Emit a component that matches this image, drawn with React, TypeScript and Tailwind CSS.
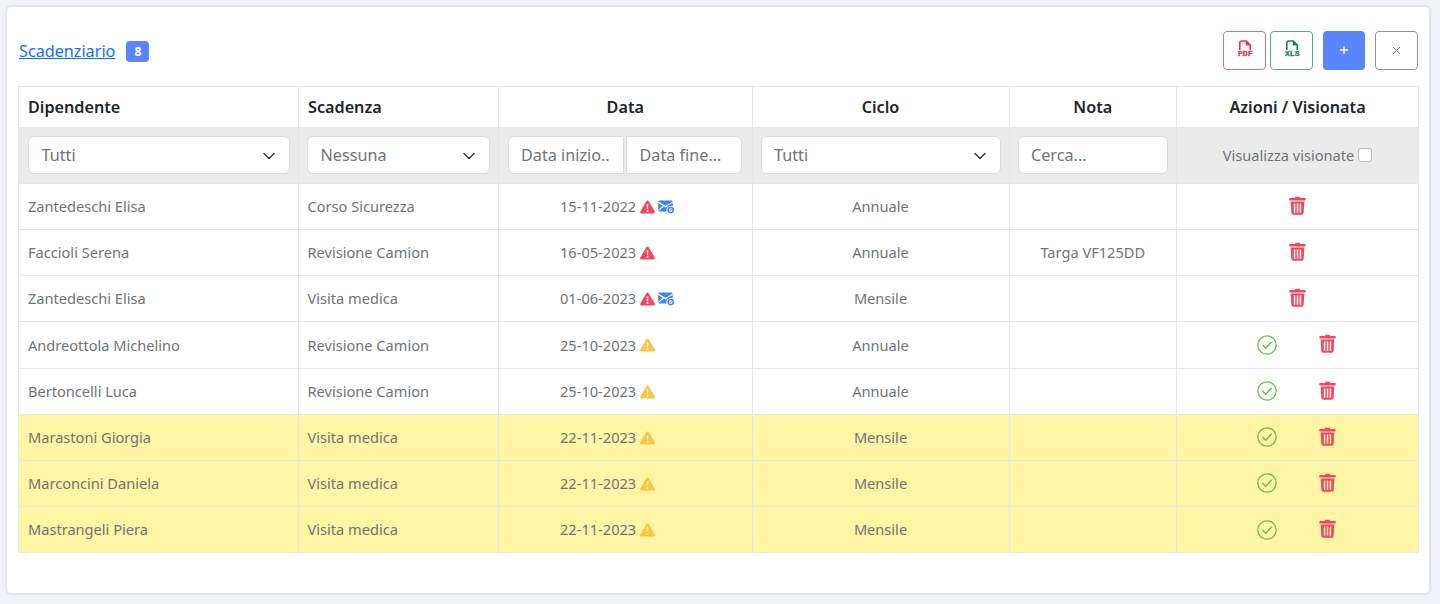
import React from "react";

const Trash = () => (
  <svg width="17" height="19" viewBox="0 0 16 18" className="block">
    <path d="M6 .6h4l.6 1.200H15a.8.8 0 0 1 .8.8v1a.7.7 0 0 1-.7.7H.9a.7.7 0 0 1-.7-.7v-1a.8.8 0 0 1 .8-.8h4.400z" fill="#f1475f" />
    <path fillRule="evenodd" d="M1.500 5.100h13l-.7 11a1.800 1.800 0 0 1-1.800 1.700H4a1.800 1.800 0 0 1-1.800-1.700zM4.500 7.100v8.700h1.400V7.100zM7.300 7.100v8.700h1.400V7.100zM10.100 7.100v8.700h1.400V7.100z" fill="#f1475f" />
  </svg>
);
const Check = () => (
  <svg width="20" height="20" viewBox="0 0 20 20" className="block -translate-x-[1px] translate-y-[1px]" fill="none">
    <circle cx="10" cy="10" r="9.200" stroke="#6cc04a" strokeWidth="1.300" />
    <path d="M5.800 10.300l2.900 2.900 5.500-6" stroke="#6cc04a" strokeWidth="1.500" strokeLinecap="round" strokeLinejoin="round" />
  </svg>
);
const Warn = ({ color }: { color: string }) => (
  <svg width="15" height="14" viewBox="0 0 15 14" className="block shrink-0">
    <path fillRule="evenodd" d="M7.500.5c.5 0 .9.3 1.200.7l6 10.400c.5.9-.1 1.900-1.200 1.900h-12c-1.100 0-1.700-1-1.200-1.900l6-10.400c.3-.4.7-.7 1.200-.7zM6.700 4.200l.2 5h1.200l.2-5zM7.500 9.900a1 1 0 1 0 0 2 1 1 0 0 0 0-2z" fill={color} />
  </svg>
);
const Mail = () => (
  <svg width="16" height="14" viewBox="0 0 16 14" className="block shrink-0 -ml-[1px]">
    <path d="M1.200.6h12.600c.5 0 .9.300 1 .8L7.500 5.700.2 1.400c.1-.5.500-.8 1-.8z" fill="#3f82f7" />
    <path d="M.2 3l4.600 2.700L.2 9.900zM14.800 3v3.200a4.200 4.200 0 0 0-4.800 1.400L8.900 5.900zM6 6.500l1.500.9 1.500-.9.400.7a4.200 4.200 0 0 0-.9 4.300H1.200c-.5 0-.8-.2-1-.6z" fill="#3f82f7" />
    <circle cx="12.700" cy="10.100" r="3.300" fill="#3f82f7" />
    <circle cx="12.700" cy="10.100" r="1.800" fill="#fff" />
    <path d="M11.700 11.100l2-2" stroke="#3f82f7" strokeWidth="1" />
  </svg>
);
const FileIcon = ({ color, label }: { color: string; label: string }) => (
  <span className="relative block w-[20px] h-[20px] translate-x-[1px]">
    <svg width="20" height="12" viewBox="0 0 20 12" className="absolute left-0 top-0" fill="none">
      <path d="M4.800 10V3a2 2 0 0 1 2-2h4.500l4 4v5" stroke={color} strokeWidth="1.600" />
      <path d="M10.800 1v4.500h4.500z" fill={color} />
    </svg>
    <span className="absolute left-[-2px] right-[-2px] top-[9.500px] text-center text-[8px] leading-[8px] font-bold font-['Liberation_Mono',monospace] [-webkit-text-stroke:0.3px]" style={{ color }}>
      {label}
    </span>
  </span>
);
const Chevron = () => (
  <svg width="12" height="8" viewBox="0 0 12 8" fill="none" className="absolute right-[14px] top-[15px]">
    <path d="M1 1.500l5 5 5-5" stroke="#343a40" strokeWidth="1.500" strokeLinecap="round" strokeLinejoin="round" />
  </svg>
);

const Select = ({ label, first }: { label: string; first?: boolean }) => (
  <div className={`relative h-[38px] bg-white border border-[#d8dbe0] rounded-[6px] pl-[12.500px] text-[16.200px] leading-[36px] text-[#6f7479] ${first ? "ml-[1px]" : ""}`}>
    {label}
    <Chevron />
  </div>
);

type Row = { n: string; s: string; d: string; w: string; mail?: boolean; c: string; nota?: string; check?: boolean; hl?: boolean };
const RED = "#f1475f";
const YEL = "#fbc444";
const rows: Row[] = [
  { n: "Zantedeschi Elisa", s: "Corso Sicurezza", d: "15-11-2022", w: RED, mail: true, c: "Annuale" },
  { n: "Faccioli Serena", s: "Revisione Camion", d: "16-05-2023", w: RED, c: "Annuale", nota: "Targa VF125DD" },
  { n: "Zantedeschi Elisa", s: "Visita medica", d: "01-06-2023", w: RED, mail: true, c: "Mensile" },
  { n: "Andreottola Michelino", s: "Revisione Camion", d: "25-10-2023", w: YEL, c: "Annuale", check: true },
  { n: "Bertoncelli Luca", s: "Revisione Camion", d: "25-10-2023", w: YEL, c: "Annuale", check: true },
  { n: "Marastoni Giorgia", s: "Visita medica", d: "22-11-2023", w: YEL, c: "Mensile", check: true, hl: true },
  { n: "Marconcini Daniela", s: "Visita medica", d: "22-11-2023", w: YEL, c: "Mensile", check: true, hl: true },
  { n: "Mastrangeli Piera", s: "Visita medica", d: "22-11-2023", w: YEL, c: "Mensile", check: true, hl: true },
];

const th = "border border-[#e4e6ea] h-[41px] p-0 text-[16.200px] font-semibold text-[#212529]";
const fc = "border border-[#e4e6ea] h-[56px] px-[8px] pt-0 pb-[2px] align-middle";
const td = "border border-[#e4e6ea] h-[46.150px] pt-[1px] pb-0 px-[9px] align-middle text-[14.600px] text-[#6f7479]";

export default function App() {
  return (
    <div className="h-[604px] bg-[#f0f1f6] pt-[5px] pl-[5px] pr-[9px] font-['Noto_Sans',sans-serif] overflow-hidden">
      <div className="h-[590px] bg-white border-2 border-[#e1e4ef] rounded-[6px] pl-[11px] pt-[23px]">
        <div className="flex items-center h-[40px] mb-[16px] w-[1400px]">
          <a className="ml-[1px] text-[16.200px] text-[#0d6efd] underline translate-y-[1px]">Scadenziario</a>
          <span className="ml-[11px] w-[23px] h-[21px] translate-y-[1px] rounded-[4px] bg-[#5c85fb] text-white text-[12px] font-bold leading-[21px] text-center">8</span>
          <div className="ml-auto flex items-center">
            <button className="w-[42.500px] h-[39px] flex items-center justify-center rounded-[4px] border border-[#ec6a7b] bg-white"><FileIcon color="#e8344c" label="PDF" /></button>
            <button className="ml-[4.500px] w-[42.500px] h-[39px] flex items-center justify-center rounded-[4px] border border-[#5aa98c] bg-white"><FileIcon color="#15805e" label="XLS" /></button>
            <button className="ml-[10px] w-[42.500px] h-[39px] rounded-[4px] bg-[#5b85fb] text-white text-[14px] flex items-center justify-center">
              <svg width="10" height="10" viewBox="0 0 10 10"><path d="M5 1v8M1 5h8" stroke="#fff" strokeWidth="1.300" /></svg>
            </button>
            <button className="ml-[10px] w-[43px] h-[39px] rounded-[4px] border border-[#8e9399] bg-white flex items-center justify-center">
              <svg width="9" height="9" viewBox="0 0 9 9"><path d="M1 1l7 7M8 1L1 8" stroke="#6c757d" strokeWidth="1" /></svg>
            </button>
          </div>
        </div>
        <table className="w-[1400px] table-fixed border-collapse">
          <colgroup>
            <col className="w-[280px]" />
            <col className="w-[200px]" />
            <col className="w-[253.500px]" />
            <col className="w-[257px]" />
            <col className="w-[167.500px]" />
            <col className="w-[242px]" />
          </colgroup>
          <thead>
            <tr>
              <th className={`${th} text-left pl-[9px]`}>Dipendente</th>
              <th className={`${th} text-left pl-[9px]`}>Scadenza</th>
              <th className={`${th} text-center`}>Data</th>
              <th className={`${th} text-center`}>Ciclo</th>
              <th className={`${th} text-center`}>Nota</th>
              <th className={`${th} text-center`}>Azioni / Visionata</th>
            </tr>
            <tr className="bg-[#ebebeb]">
              <th className={`${fc} font-normal text-left`}><Select first label="Tutti" /></th>
              <th className={`${fc} font-normal text-left`}><Select label="Nessuna" /></th>
              <th className={`${fc} font-normal text-left`}>
                <div className="flex gap-[2px] ml-[1px]">
                  <div className="w-[116px] h-[38px] bg-white border border-[#d8dbe0] rounded-l-[6px] pl-[12px] text-[16.200px] leading-[36px] text-[#6f7479] whitespace-nowrap">Data inizio..</div>
                  <div className="w-[116px] h-[38px] bg-white border border-[#d8dbe0] rounded-r-[6px] pl-[12.500px] text-[16.200px] leading-[36px] text-[#6f7479] whitespace-nowrap">Data fine...</div>
                </div>
              </th>
              <th className={`${fc} font-normal text-left`}><Select label="Tutti" /></th>
              <th className={`${fc} font-normal text-left`}>
                <div className="h-[38px] bg-white border border-[#d8dbe0] rounded-[6px] pl-[12.500px] text-[16.200px] leading-[36px] text-[#6f7479]">Cerca...</div>
              </th>
              <th className={`${fc} font-normal`}>
                <div className="flex items-center justify-center gap-[4px] translate-y-[1px] text-[14.600px] text-[#6f7479]">
                  Visualizza visionate
                  <span className="w-[14px] h-[14px] rounded-[3px] bg-white border border-[#b9bcc1]" />
                </div>
              </th>
            </tr>
          </thead>
          <tbody>
            {rows.map((r, i) => (
              <tr key={i} className={r.hl ? "bg-[#fef5a5]" : "bg-white"}>
                <td className={td}>{r.n}</td>
                <td className={`${td} !pl-[8.500px]`}>{r.s}</td>
                <td className={`${td} !pl-[61px]`}>
                  <div className="flex items-center gap-[4px]">
                    <span>{r.d}</span>
                    <Warn color={r.w} />
                    {r.mail && <Mail />}
                  </div>
                </td>
                <td className={`${td} text-center`}>{r.c}</td>
                <td className={`${td} text-center`}>{r.nota}</td>
                <td className={td}>
                  <div className={`flex items-center justify-center gap-[41px] h-[20px] -mt-[3px] ${r.check ? "-translate-x-[1px]" : ""}`}>
                    {r.check && <Check />}
                    <Trash />
                  </div>
                </td>
              </tr>
            ))}
          </tbody>
        </table>
      </div>
    </div>
  );
}
